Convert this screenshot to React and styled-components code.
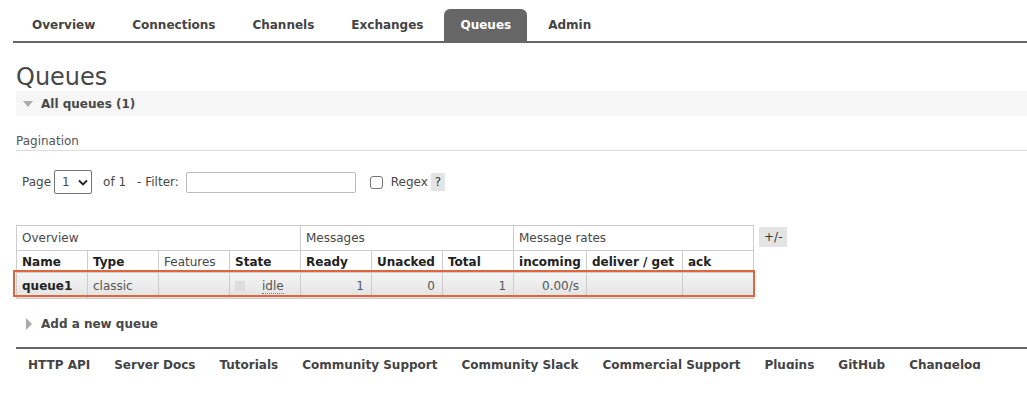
import React from "react";
import styled, { createGlobalStyle } from "styled-components";

const Global = createGlobalStyle`
  html, body { margin: 0; padding: 0; background: #fff; }
  body { font-family: "DejaVu Sans", Verdana, sans-serif; font-size: 12px; color: #484848; }
`;

const Page = styled.div`
  position: relative;
  padding: 9px 0 0 16px;
  width: 1011px;
  height: 390px;
  overflow: hidden;
`;

const Tabs = styled.ul`
  display: flex;
  list-style: none;
  margin: 0 0 0 -3px;
  padding: 0 0 0 3px;
  border-bottom: 2px solid #666;
  gap: 5px;
`;

const Tab = styled.li`
  height: 32px;
  display: flex;
  align-items: center;
  padding: 0 16px;
  font-weight: bold;
  font-size: 12px;
  color: ${(p) => (p.$active ? "#fff" : "#444")};
  background: ${(p) => (p.$active ? "#666" : "transparent")};
  border-radius: 6px 6px 0 0;
`;

const Title = styled.h1`
  margin: 20px 0 0 0;
  font-size: 24px;
  font-weight: normal;
  line-height: 28px;
  color: #484848;
`;

const SectionHead = styled.div`
  display: flex;
  align-items: center;
  height: 25px;
  background: #f6f6f6;
  font-weight: bold;
  color: #484848;
  padding-left: 6px;
  gap: 8px;
`;

const Tri = styled.span`
  width: 0;
  height: 0;
  ${(p) =>
    p.$dir === "down"
      ? `border-left: 5px solid transparent; border-right: 5px solid transparent; border-top: 6px solid #aaa; margin-left: 1px;`
      : `border-top: 6px solid transparent; border-bottom: 6px solid transparent; border-left: 6px solid #aaa; margin-left: 4px;`}
`;

const SubTitle = styled.div`
  margin-top: 18px;
  padding-bottom: 2px;
  border-bottom: 1px solid #ddd;
  color: #555;
  font-size: 12px;
`;

const FilterRow = styled.div`
  display: flex;
  align-items: center;
  margin-top: 19px;
  padding-left: 6px;
  height: 24px;
  color: #484848;
`;

const Select = styled.div`
  margin-left: 3px;
  width: 38px;
  height: 24px;
  box-sizing: border-box;
  border: 1px solid #767676;
  border-radius: 2px;
  display: flex;
  align-items: center;
  padding-left: 7px;
  gap: 8px;
`;

const Gap = styled.span`
  margin-left: ${(p) => p.$m}px;
`;

const Input = styled.div`
  width: 170px;
  height: 21px;
  box-sizing: border-box;
  border: 1px solid #bbb;
  border-radius: 2px;
  margin-left: 7px;
`;

const Check = styled.div`
  width: 13px;
  height: 13px;
  box-sizing: border-box;
  border: 1px solid #767676;
  border-radius: 3px;
  margin-left: 14px;
`;

const Help = styled.span`
  background: #e4e4e4;
  padding: 2px 4px;
  margin-left: 3px;
  color: #333;
`;

const TableWrap = styled.div`
  position: relative;
  display: flex;
  align-items: flex-start;
  margin-top: 31px;
  gap: 5px;
`;

const Table = styled.table`
  border-collapse: collapse;
  table-layout: fixed;
  width: 738px;
`;

const Th = styled.th`
  border: 1px solid #ccc;
  text-align: left;
  font-weight: ${(p) => (p.$normal ? "normal" : "bold")};
  padding: 0 5px;
  height: ${(p) => (p.$group ? "24px" : "21px")};
  color: ${(p) => (p.$normal ? "#484848" : "#222")};
  white-space: nowrap;
  overflow: hidden;
`;

const Tr = styled.tr`
  background: linear-gradient(#f4f4f4, #e2e2e2);
`;

const Td = styled.td`
  border: 1px solid #ccc;
  height: 25px;
  padding: 0 7px 0 5px;
  text-align: ${(p) => (p.$right ? "right" : "left")};
  font-weight: ${(p) => (p.$bold ? "bold" : "normal")};
  color: ${(p) => (p.$bold ? "#222" : "#555")};
  white-space: nowrap;
`;

const StateBox = styled.span`
  display: inline-block;
  width: 10px;
  height: 10px;
  background: #ddd;
  vertical-align: middle;
  margin-right: 17px;
`;

const Idle = styled.span`
  border-bottom: 1px dotted #777;
  color: #555;
`;

const Toggle = styled.span`
  background: #e4e4e4;
  padding: 3px 5px;
  margin-top: 2px;
  color: #333;
`;

const Annot = styled.div`
  position: absolute;
  left: -3px;
  top: 45px;
  width: 742px;
  height: 27px;
  box-sizing: border-box;
  border: 2px solid #e0643c;
  pointer-events: none;
`;

const AddRow = styled.div`
  display: flex;
  align-items: center;
  gap: 9px;
  margin-top: 15px;
  padding-left: 6px;
  font-weight: bold;
  color: #484848;
  height: 20px;
`;

const Footer = styled.div`
  display: flex;
  margin-top: 13px;
  border-top: 2px solid #666;
  padding: 9px 0 0 12px;
  gap: 24px;
`;

const FootLink = styled.span`
  font-weight: bold;
  color: #444;
`;

const Fade = styled.div`
  position: absolute;
  left: 740px;
  top: 369px;
  width: 287px;
  height: 30px;
  background: rgba(255, 255, 255, 0.96);
`;

const tabs = ["Overview", "Connections", "Channels", "Exchanges", "Queues", "Admin"];
const links = [
  "HTTP API",
  "Server Docs",
  "Tutorials",
  "Community Support",
  "Community Slack",
  "Commercial Support",
  "Plugins",
  "GitHub",
  "Changelog",
];
const widths = [71, 71, 71, 71, 71, 71, 71, 73, 96, 71];

export default function App() {
  return (
    <>
      <Global />
      <Page>
        <Tabs>
          {tabs.map((t) => (
            <Tab key={t} $active={t === "Queues"}>
              {t}
            </Tab>
          ))}
        </Tabs>
        <Title>Queues</Title>
        <SectionHead>
          <Tri $dir="down" />
          All queues (1)
        </SectionHead>
        <SubTitle>Pagination</SubTitle>
        <FilterRow>
          Page
          <Select>
            1
            <svg width="10" height="7" viewBox="0 0 10 7">
              <path d="M1 1.5 L5 5.5 L9 1.5" fill="none" stroke="#222" strokeWidth="1.8" />
            </svg>
          </Select>
          <Gap $m={11}>of 1</Gap>
          <Gap $m={11}>- Filter:</Gap>
          <Input />
          <Check />
          <Gap $m={8}>Regex</Gap>
          <Help>?</Help>
        </FilterRow>
        <TableWrap>
          <Table>
            <colgroup>
              {widths.map((w, i) => (
                <col key={i} style={{ width: w }} />
              ))}
            </colgroup>
            <thead>
              <tr>
                <Th $group $normal colSpan={4}>Overview</Th>
                <Th $group $normal colSpan={3}>Messages</Th>
                <Th $group $normal colSpan={3}>Message rates</Th>
              </tr>
              <tr>
                <Th>Name</Th>
                <Th>Type</Th>
                <Th $normal>Features</Th>
                <Th>State</Th>
                <Th>Ready</Th>
                <Th>Unacked</Th>
                <Th>Total</Th>
                <Th>incoming</Th>
                <Th>deliver / get</Th>
                <Th>ack</Th>
              </tr>
            </thead>
            <tbody>
              <Tr>
                <Td $bold>queue1</Td>
                <Td>classic</Td>
                <Td />
                <Td>
                  <StateBox />
                  <Idle>idle</Idle>
                </Td>
                <Td $right>1</Td>
                <Td $right>0</Td>
                <Td $right>1</Td>
                <Td $right>0.00/s</Td>
                <Td />
                <Td />
              </Tr>
            </tbody>
          </Table>
          <Toggle>+/-</Toggle>
          <Annot />
        </TableWrap>
        <AddRow>
          <Tri $dir="right" />
          Add a new queue
        </AddRow>
        <Footer>
          {links.map((l) => (
            <FootLink key={l}>{l}</FootLink>
          ))}
        </Footer>
        <Fade />
      </Page>
    </>
  );
}
